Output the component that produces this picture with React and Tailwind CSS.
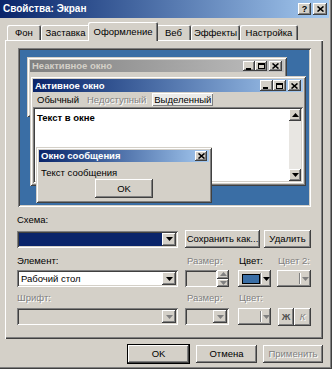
import React from "react";

const raised =
  "shadow-[inset_-1px_-1px_#404040,inset_1px_1px_#ffffff,inset_-2px_-2px_#808080,inset_2px_2px_#d4d0c8]";
const sunken =
  "shadow-[inset_1px_1px_#808080,inset_-1px_-1px_#ffffff,inset_2px_2px_#404040,inset_-2px_-2px_#d4d0c8]";
const frame =
  "shadow-[inset_1px_1px_#d4d0c8,inset_-1px_-1px_#404040,inset_2px_2px_#ffffff,inset_-2px_-2px_#808080]";
const dis = "text-[#808080] [text-shadow:1px_1px_0_#ffffff]";

const Tri = ({ up = false, color = "#000" }) => (
  <svg width="7" height="4" viewBox="0 0 7 4">
    <polygon points={up ? "0,4 7,4 3.5,0" : "0,0 7,0 3.5,4"} fill={color} />
  </svg>
);

const ArrowBtn = ({ disabled = false, w = "w-[16px]" }) => (
  <div className={`${w} h-full bg-[#d4d0c8] flex items-center justify-center ${raised}`}>
    <Tri color={disabled ? "#808080" : "#000"} />
  </div>
);

// combo box: sunken field + arrow button
const Combo = ({ w, children, fill = "bg-white", disabled = false }) => (
  <div className={`${w} h-[17px] p-[2px] flex ${sunken} ${disabled ? "bg-[#d4d0c8]" : "bg-white"}`}>
    <div className={`flex-1 flex items-center pl-[2px] ${fill}`}>{children}</div>
    <ArrowBtn disabled={disabled} w="w-[14px]" />
  </div>
);

const Btn = ({ w, children, className = "" }) => (
  <div className={`${w} h-[18px] bg-[#d4d0c8] flex items-center justify-center ${raised} ${className}`}>
    {children}
  </div>
);

const ColorBtn = ({ swatch, disabled = false, w = "w-[33px]" }) => (
  <div className={`${w} h-[17px] bg-[#d4d0c8] flex items-center pl-[4px] pr-[3px] ${raised}`}>
    <div className="w-[18px] h-[10px] flex-none">
      {swatch && <div className="w-full h-full bg-[#3a6ea5] border border-black" />}
    </div>
    <div className="ml-auto w-[2px] h-[11px] border-l border-[#808080] border-r border-r-white" />
    <div className="ml-[1px]">
      <Tri color={disabled ? "#808080" : "#000"} />
    </div>
  </div>
);

const Cap = ({ kind, h = "h-[11px]", w = "w-[13px]" }) => (
  <div className={`${w} ${h} bg-[#d4d0c8] flex items-center justify-center ${raised}`}>
    {kind === "x" && (
      <svg width="7" height="6" viewBox="0 0 7 6">
        <path d="M0.5 0.5 L6.5 5.5 M6.5 0.5 L0.5 5.5" stroke="#000" strokeWidth="1.6" />
      </svg>
    )}
    {kind === "min" && <div className="w-[5px] h-[2px] bg-black mt-[5px] mr-[2px]" />}
    {kind === "max" && <div className="w-[7px] h-[6px] border border-black border-t-2" />}
    {kind === "?" && <span className="font-bold text-[9px] leading-none">?</span>}
  </div>
);

const Tab = ({ w, label, active = false }) =>
  active ? (
    <div
      className={`${w} -mx-[2px] h-[19px] mb-[-1px] z-10 relative bg-[#d4d0c8] rounded-t-[2px] flex items-center justify-center shadow-[inset_1px_1px_#ffffff,inset_-1px_0_#404040,inset_-2px_0_#808080]`}
    >
      {label}
    </div>
  ) : (
    <div
      className={`${w} h-[15px] bg-[#d4d0c8] rounded-t-[2px] flex items-center justify-center shadow-[inset_1px_1px_#ffffff,inset_-1px_0_#404040,inset_-2px_0_#808080]`}
    >
      {label}
    </div>
  );

const Preview = () => (
  <div className={`ml-[1px] w-[293px] h-[159px] relative bg-[#3a6ea5] ${sunken}`}>
    {/* inactive window */}
    <div className={`absolute left-[9px] top-[9px] w-[260px] h-[60px] bg-[#d4d0c8] p-[3px] ${frame}`}>
      <div className="h-[12px] bg-gradient-to-r from-[#808080] to-[#c0c0c0] flex items-center pl-[2px] pr-[2px]">
        <span className="font-bold text-[#d4d0c8] text-[9.5px]">Неактивное окно</span>
        <div className="ml-auto flex">
          <Cap kind="min" h="h-[10px]" w="w-[12px]" />
          <Cap kind="max" h="h-[10px]" w="w-[12px]" />
          <div className="w-[2px]" />
          <Cap kind="x" h="h-[10px]" w="w-[13px]" />
        </div>
      </div>
    </div>

    {/* active window */}
    <div className={`absolute left-[12px] top-[28px] w-[276px] h-[110px] bg-[#d4d0c8] p-[3px] flex flex-col ${frame}`}>
      <div className="h-[13px] flex-none bg-gradient-to-r from-[#0a246a] to-[#a6caf0] flex items-center pl-[2px] pr-[2px]">
        <span className="font-bold text-white text-[9.5px]">Активное окно</span>
        <div className="ml-auto flex">
          <Cap kind="min" />
          <Cap kind="max" />
          <div className="w-[2px]" />
          <Cap kind="x" />
        </div>
      </div>
      <div className="h-[15px] flex-none flex items-center pl-[4px]">
        <span>Обычный</span>
        <span className={`ml-[8px] ${dis}`}>Недоступный</span>
        <span className="ml-[6px] px-[2px] h-[13px] flex items-center bg-[#ecebe8] shadow-[inset_1px_1px_#ffffff,inset_-1px_-1px_#808080]">
          Выделенный
        </span>
      </div>
      <div className={`flex-1 bg-white p-[2px] flex ${sunken}`}>
        <div className="flex-1 pl-[2px] pt-[3px] font-bold text-[9.5px] leading-[12px]">Текст в окне</div>
        <div className="w-[12px] flex flex-col bg-[#e8e6e2]">
          <div className={`h-[12px] bg-[#d4d0c8] flex items-center justify-center ${raised}`}>
            <Tri up />
          </div>
          <div className="flex-1" />
          <div className={`h-[12px] bg-[#d4d0c8] flex items-center justify-center ${raised}`}>
            <Tri />
          </div>
        </div>
      </div>
    </div>

    {/* message box */}
    <div className={`absolute left-[18px] top-[99px] w-[176px] h-[56px] bg-[#d4d0c8] p-[3px] flex flex-col ${frame}`}>
      <div className="h-[12px] flex-none bg-gradient-to-r from-[#0a246a] to-[#a6caf0] flex items-center pl-[2px] pr-[2px]">
        <span className="font-bold text-white text-[9.5px]">Окно сообщения</span>
        <div className="ml-auto">
          <Cap kind="x" h="h-[10px]" w="w-[12px]" />
        </div>
      </div>
      <div className="pl-[2px] mt-[5px] leading-[11px]">Текст сообщения</div>
      <div className="flex ml-[56px] mt-[1px]">
        <Btn w="w-[58px]" className="h-[19px]">OK</Btn>
      </div>
    </div>
  </div>
);

export default function App() {
  return (
    <div className="w-[332px] h-[369px] bg-[#d4d0c8] overflow-hidden relative font-['Liberation_Sans',Arial,sans-serif] text-[9.5px] leading-[12px] text-black shadow-[inset_-1px_-1px_#404040,inset_-2px_-2px_#808080]">
      {/* title bar */}
      <div className="h-[18px] mr-[3px] bg-gradient-to-r from-[#0a246a] to-[#a6caf0] flex items-center pl-[3px] pr-[2px]">
        <span className="font-bold text-white text-[10px]">Свойства: Экран</span>
        <div className="ml-auto flex">
          <Cap kind="?" h="h-[12px]" w="w-[13px]" />
          <div className="w-[2px]" />
          <Cap kind="x" h="h-[12px]" w="w-[14px]" />
        </div>
      </div>

      {/* tabs */}
      <div className="h-[18px] mt-[4px] pl-[7px] flex items-end">
        <Tab w="w-[34px]" label="Фон" />
        <Tab w="w-[49px]" label="Заставка" />
        <Tab w="w-[70px]" label="Оформление" active />
        <Tab w="w-[35px]" label="Веб" />
        <Tab w="w-[49px]" label="Эффекты" />
        <Tab w="w-[58px]" label="Настройка" />
      </div>

      {/* tab panel */}
      <div className="ml-[5px] w-[318px] h-[299px] pt-[8px] pl-[12px] shadow-[inset_1px_1px_#ffffff,inset_-1px_-1px_#404040,inset_-2px_-2px_#808080]">
        <Preview />

        <div className="mt-[7px]">Схема:</div>
        <div className="mt-[4px] h-[18px] flex items-center">
          <Combo w="w-[161px]" fill="bg-[#0a246a]" />
          <Btn w="w-[75px]" className="ml-[7px]">Сохранить как...</Btn>
          <Btn w="w-[47px]" className="ml-[4px]">Удалить</Btn>
        </div>

        <div className="mt-[7px] flex">
          <span className="w-[170px]">Элемент:</span>
          <span className={`w-[52px] ${dis}`}>Размер:</span>
          <span className="w-[39px]">Цвет:</span>
          <span className={dis}>Цвет 2:</span>
        </div>
        <div className="mt-[3px] h-[17px] flex">
          <Combo w="w-[161px]">Рабочий стол</Combo>
          <div className="ml-[7px] w-[44px] h-[17px] flex">
            <div className={`flex-1 bg-[#d4d0c8] ${sunken}`} />
            <div className="w-[12px] flex flex-col">
              <div className={`flex-1 flex items-center justify-center ${raised}`}>
                <Tri up color="#808080" />
              </div>
              <div className={`flex-1 flex items-center justify-center ${raised}`}>
                <Tri color="#808080" />
              </div>
            </div>
          </div>
          <div className="ml-[9px]">
            <ColorBtn swatch />
          </div>
          <div className="ml-[6px]">
            <ColorBtn disabled w="w-[34px]" />
          </div>
        </div>

        <div className={`mt-[5px] flex ${dis}`}>
          <span className="w-[170px]">Шрифт:</span>
          <span className="w-[52px]">Размер:</span>
          <span>Цвет:</span>
        </div>
        <div className="mt-[4px] h-[17px] flex">
          <Combo w="w-[161px]" disabled fill="bg-[#d4d0c8]" />
          <div className="ml-[7px]">
            <Combo w="w-[44px]" disabled fill="bg-[#d4d0c8]" />
          </div>
          <div className="ml-[9px]">
            <ColorBtn disabled />
          </div>
          <Btn w="w-[16px]" className="ml-[7px] h-[17px] font-bold text-[#505050]">Ж</Btn>
          <Btn w="w-[17px]" className={`h-[17px] italic ${dis}`}>К</Btn>
        </div>
      </div>

      {/* bottom buttons */}
      <div className="mt-[5px] flex pl-[127px]">
        <div className="w-[63px] h-[20px] border border-black">
          <Btn w="w-full" className="h-full">OK</Btn>
        </div>
        <Btn w="w-[61px]" className="ml-[6px] mt-[1px]">Отмена</Btn>
        <Btn w="w-[60px]" className={`ml-[6px] mt-[1px] ${dis}`}>Применить</Btn>
      </div>
    </div>
  );
}
